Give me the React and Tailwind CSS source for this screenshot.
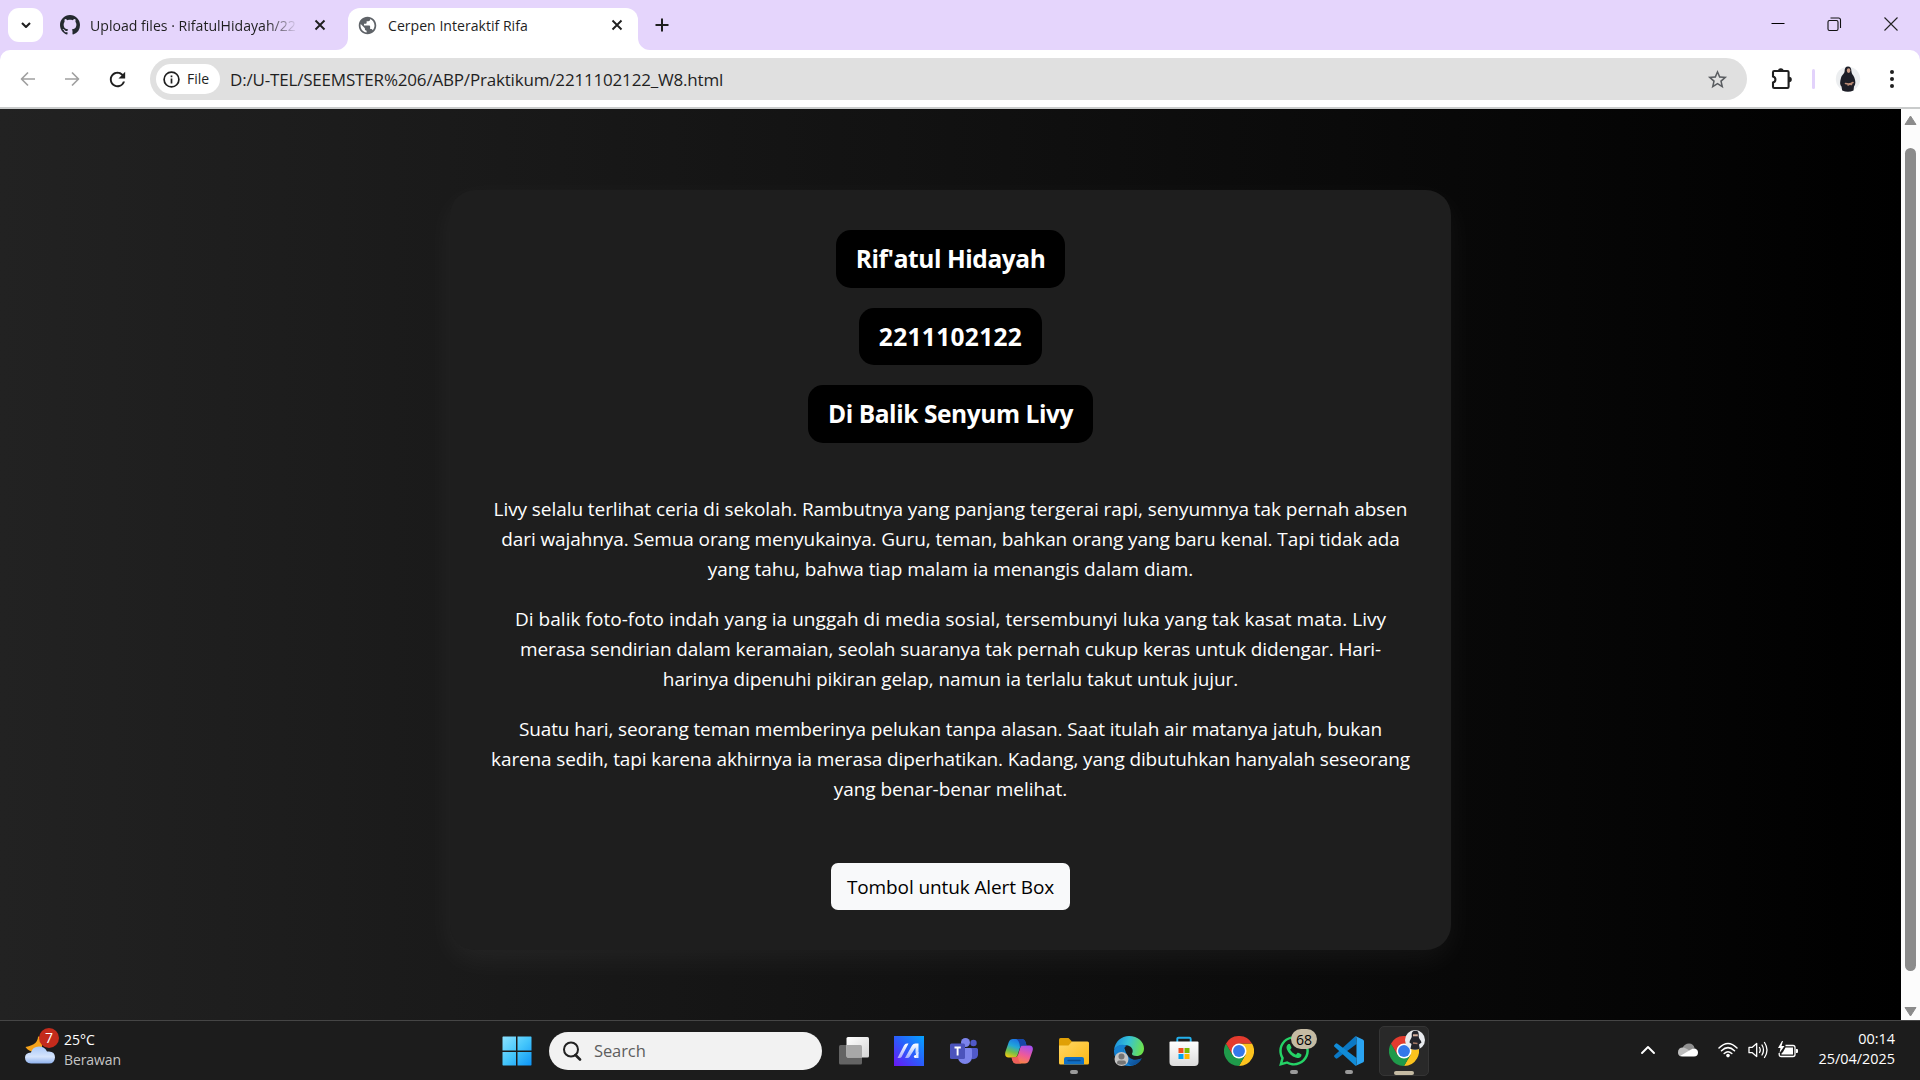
import { MdPublic, MdRefresh, MdStarBorder } from "react-icons/md";
import { FaWhatsapp } from "react-icons/fa";

const titles = [
  { text: "Rif'atul Hidayah", cls: "w-[229px] h-[58px] tracking-[-0.42px]" },
  { text: "2211102122", cls: "w-[183px] h-[57px] tracking-[0.33px]" },
  { text: "Di Balik Senyum Livy", cls: "w-[285px] h-[58px] tracking-[-0.42px]" },
];

const paragraphs = [
  [
    ["Livy selalu terlihat ceria di sekolah. Rambutnya yang panjang tergerai rapi, senyumnya tak pernah absen", "tracking-[-0.07px]"],
    ["dari wajahnya. Semua orang menyukainya. Guru, teman, bahkan orang yang baru kenal. Tapi tidak ada", "tracking-[-0.105px]"],
    ["yang tahu, bahwa tiap malam ia menangis dalam diam.", "tracking-[-0.035px]"],
  ],
  [
    ["Di balik foto-foto indah yang ia unggah di media sosial, tersembunyi luka yang tak kasat mata. Livy", "tracking-[0.045px]"],
    ["merasa sendirian dalam keramaian, seolah suaranya tak pernah cukup keras untuk didengar. Hari-", "tracking-[-0.138px]"],
    ["harinya dipenuhi pikiran gelap, namun ia terlalu takut untuk jujur.", "tracking-[-0.1px]"],
  ],
  [
    ["Suatu hari, seorang teman memberinya pelukan tanpa alasan. Saat itulah air matanya jatuh, bukan", "tracking-[-0.125px]"],
    ["karena sedih, tapi karena akhirnya ia merasa diperhatikan. Kadang, yang dibutuhkan hanyalah seseorang", "tracking-[-0.12px]"],
    ["yang benar-benar melihat.", "tracking-[-0.03px]"],
  ],
];

function Stroke({ d, size = 20, w = 2, color = "#1f1f1f", className = "", cap = "butt" }) {
  return (
    <svg className={"shrink-0 " + className} width={size} height={size} viewBox={`0 0 ${size} ${size}`} fill="none" stroke={color} strokeWidth={w} strokeLinecap={cap} strokeLinejoin="round">
      <path d={d} />
    </svg>
  );
}

function CloseX() {
  return <Stroke size={12} d="M1.5 1.5 10.5 10.5M10.5 1.5 1.5 10.5" w={1.9} />;
}

function GithubMark() {
  return (
    <svg className="shrink-0" width="20" height="20" viewBox="0 0 16 16" fill="#24292f">
      <path d="M8 0C3.58 0 0 3.58 0 8c0 3.54 2.29 6.53 5.47 7.59.4.07.55-.17.55-.38 0-.19-.01-.82-.01-1.49-2.01.37-2.53-.49-2.69-.94-.09-.23-.48-.94-.82-1.13-.28-.15-.68-.52-.01-.53.63-.01 1.08.58 1.23.82.72 1.21 1.87.87 2.33.66.07-.52.28-.87.51-1.07-1.78-.2-3.64-.89-3.64-3.95 0-.87.31-1.59.82-2.15-.08-.2-.36-1.02.08-2.12 0 0 .67-.21 2.2.82.64-.18 1.32-.27 2-.27.68 0 1.36.09 2 .27 1.53-1.04 2.2-.82 2.2-.82.44 1.1.16 1.92.08 2.12.51.56.82 1.27.82 2.15 0 3.07-1.87 3.75-3.65 3.95.29.25.54.73.54 1.48 0 1.07-.01 1.93-.01 2.2 0 .21.15.46.55.38A8.013 8.013 0 0016 8c0-4.42-3.58-8-8-8z" />
    </svg>
  );
}

function TabStrip() {
  return (
    <div className="flex h-[50px] items-end pl-2">
      <div className="mb-2 flex h-[34px] w-[35px] items-center justify-center rounded-[11px] bg-white">
        <Stroke size={12} d="M2 4 6 8 10 4" w={2.1} />
      </div>
      <div className="flex h-[42px] w-[305px] items-center pb-[8px] pl-[17px] pt-0">
        <GithubMark />
        <span className="ml-[10px] mt-[2px] w-[208px] overflow-hidden whitespace-nowrap text-[14.1px] leading-5 [mask-image:linear-gradient(to_right,black_85%,transparent)]">
          Upload files · RifatulHidayah/22
        </span>
        <span className="ml-[16px]"><CloseX /></span>
      </div>
      <div className="relative flex h-[42px] w-[290px] items-center rounded-t-[12px] bg-white pb-[8px] pl-[9px]">
        <svg className="absolute bottom-0 -left-[12px]" width="12" height="12"><path d="M12 0V12H0A12 12 0 0 0 12 0Z" fill="#fff" /></svg>
        <svg className="absolute bottom-0 -right-[12px]" width="12" height="12"><path d="M0 0V12H12A12 12 0 0 1 0 0Z" fill="#fff" /></svg>
        <MdPublic className="size-[21px] shrink-0 text-[#5f6368]" />
        <span className="ml-[10px] mt-[2px] w-[223px] whitespace-nowrap text-[14.1px] leading-5">Cerpen Interaktif Rifa</span>
        <CloseX />
      </div>
      <Stroke className="mb-[18px] ml-[17px]" size={14} d="M7 0.5V13.5M0.5 7H13.5" w={2} />
      <div className="ml-auto flex h-[50px] items-center gap-[42px] pb-[2px] pr-[22px]">
        <Stroke size={14} d="M0.5 6.5H13.5" w={1} color="#000" />
        <svg width="15" height="15" viewBox="0 0 15 15" fill="none" stroke="#111" strokeWidth="1.1">
          <rect x="1" y="3.5" width="10" height="10" rx="1.5" />
          <path d="M3.5 1H11.5A2 2 0 0 1 13.5 3V11" />
        </svg>
        <Stroke size={14} d="M0.5 0.5 13.5 13.5M13.5 0.5 0.5 13.5" w={1.1} color="#222" />
      </div>
    </div>
  );
}

function Toolbar() {
  return (
    <div className="flex h-[59px] items-start rounded-t-[10px] border-b-2 border-[#c9cbcb] bg-white pl-[20px] pt-[8px]">
      <div className="flex h-[42px] items-center">
        <Stroke size={16} d="M15 8H2M8 1.5 1.5 8 8 14.5" w={1.7} color="#a0a0a0" />
        <Stroke className="ml-[28px]" size={16} d="M1 8H14M8 1.5 14.5 8 8 14.5" w={1.7} color="#a0a0a0" />
        <MdRefresh className="ml-[26px] size-[23px] text-[#1f1f1f]" />
      </div>
      <div className="ml-[21px] flex h-[42px] w-[1597px] items-center rounded-full bg-[#e0e0e0] pl-[6px] pr-[18px]">
        <div className="flex h-[30px] w-[64px] items-center rounded-full bg-white pl-[7px]">
          <svg width="17" height="17" viewBox="0 0 17 17" fill="none" stroke="#1f1f1f" strokeWidth="1.7">
            <circle cx="8.5" cy="8.5" r="7.4" />
            <path d="M8.5 7.6V12.4M8.5 4.4V6.2" />
          </svg>
          <span className="ml-[7px] text-[14px] font-medium leading-5">File</span>
        </div>
        <span className="ml-[10px] mt-[1px] whitespace-nowrap text-[17px] leading-6 tracking-[-0.18px]">D:/U-TEL/SEEMSTER%206/ABP/Praktikum/2211102122_W8.html</span>
        <MdStarBorder className="ml-auto size-[23px] text-[#5a5d61]" />
      </div>
      <div className="ml-[24px] flex h-[42px] items-center">
        <svg width="23" height="22" viewBox="0 0 23 22" fill="none">
          <path d="M3.2 3H16.4A1.2 1.2 0 0 1 17.6 4.2V18.8A1.2 1.2 0 0 1 16.4 20H3.2A1.2 1.2 0 0 1 2 18.8V14.6A3.2 3.2 0 0 0 2 8.4V4.2A1.2 1.2 0 0 1 3.2 3Z" stroke="#1f1f1f" strokeWidth="2.1" />
          <path d="M7 3A2.8 2.8 0 0 1 12.6 3ZM18 8.7A2.8 2.8 0 0 1 18 14.3Z" fill="#1f1f1f" />
        </svg>
        <div className="ml-[18px] h-[20px] w-[3px] rounded bg-[#e2d2fb]" />
        <svg className="ml-[20px]" width="26" height="26" viewBox="0 0 26 26">
          <circle cx="13" cy="13" r="12.2" fill="#eceef0" />
          <path d="M13 .5C10.600.5 9.600 2.600 9.600 5.200 9.600 7.500 7 8.500 6 12 5 15.500 4.500 18.500 6.500 20.500L7.200 24.500Q13 27 18.500 24.500L19 20.500C21 18 20.500 14.500 19.300 11.500 18.300 9 16.500 8 16.400 5 16.300 2.300 15.400.5 13 .5Z" fill="#1c1d26" />
          <ellipse cx="13.600" cy="4.600" rx="1.800" ry="2.400" fill="#c99b85" />
          <path d="M10.500 17.500 16.500 18.500M13 19 18 16.500" stroke="#b98a74" strokeWidth="1.600" strokeLinecap="round" />
        </svg>
        <svg className="ml-[28px]" width="6" height="20" viewBox="0 0 6 20" fill="#1f1f1f">
          <circle cx="3" cy="3" r="2" /><circle cx="3" cy="10" r="2" /><circle cx="3" cy="17" r="2" />
        </svg>
      </div>
    </div>
  );
}

function Page() {
  return (
    <div className="flex h-[911px] bg-[#fcfcfc]">
      <main className="flex w-[1901px] justify-center bg-[linear-gradient(to_right,#222222,#000000)] pt-[81px] text-white">
        <section className="flex h-[760px] w-[1001px] flex-col items-center rounded-[25px] bg-[#1e1e1e] pt-[40px] shadow-[0_10px_30px_rgba(255,255,255,0.05)]">
          <div className="flex flex-col items-center gap-[20px]">
            {titles.map((t) => (
              <h1 key={t.text} className={"flex items-center justify-center whitespace-nowrap rounded-[15px] bg-black pt-[1px] text-[24.5px] font-bold " + t.cls}>{t.text}</h1>
            ))}
          </div>
          <div className="mt-[51px] flex flex-col gap-[20px]">
            {paragraphs.map((lines, i) => (
              <p key={i} className="text-center text-[19px] leading-[30px]">
                {lines.map(([text, cls]) => (
                  <span key={text} className={"block whitespace-nowrap " + cls}>{text}</span>
                ))}
              </p>
            ))}
          </div>
          <button className="mt-[59px] h-[47px] w-[239px] rounded-[7px] bg-[#f8f9fa] pt-[2px] text-[19px] tracking-[-0.11px] text-black">Tombol untuk Alert Box</button>
        </section>
      </main>
      <div className="flex w-[19px] flex-col items-center pb-[3px] pt-[6px]">
        <svg width="13" height="11" viewBox="0 0 13 11"><path d="M6.500 1 12 9.500H1Z" fill="#8b8b8b" stroke="#8b8b8b" strokeLinejoin="round" /></svg>
        <div className="mt-[22px] h-[823px] w-[11px] rounded-full bg-[#8b8b8b]" />
        <svg className="mt-auto" width="13" height="11" viewBox="0 0 13 11"><path d="M6.500 10 12 1.500H1Z" fill="#8b8b8b" stroke="#8b8b8b" strokeLinejoin="round" /></svg>
      </div>
    </div>
  );
}

function WindowsLogo() {
  return (
    <svg width="30" height="30" viewBox="0 0 30 30">
      <defs><linearGradient id="win" x1="0" y1="0" x2="30" y2="30" gradientUnits="userSpaceOnUse"><stop stopColor="#8fe3ff" /><stop offset=".5" stopColor="#45c6fb" /><stop offset="1" stopColor="#0a92f7" /></linearGradient></defs>
      <path d="M1 .5H14V14.500H.5V1ZM15.500.5H29L29.500 1V14.500H15.500ZM.5 16H14V29.500H1L.5 29ZM15.500 16H29.500V29L29 29.500H15.500Z" fill="url(#win)" />
    </svg>
  );
}

function TaskView() {
  return (
    <svg width="30" height="30" viewBox="0 0 30 30">
      <defs><linearGradient id="tv" x1="0" y1="0" x2="1" y2="1"><stop stopColor="#fff" /><stop offset="1" stopColor="#d5d5d5" /></linearGradient></defs>
      <rect x="0" y="9" width="23" height="19.500" rx="1.500" fill="#636363" />
      <rect x="7.500" y="1" width="22.500" height="20.500" rx="1.500" fill="url(#tv)" />
      <path d="M7.500 9H21.500Q23 9 23 10.500V21.500H9Q7.500 21.500 7.500 20Z" fill="#a8a8a8" />
    </svg>
  );
}

function MyAsus() {
  return (
    <svg width="30" height="30" viewBox="0 0 30 30">
      <defs>
        <linearGradient id="as" x1="0" y1="1" x2="1" y2="0"><stop stopColor="#6a16f5" /><stop offset=".5" stopColor="#2b5cfb" /><stop offset="1" stopColor="#04a4ff" /></linearGradient>
        <linearGradient id="asw" x1="0" y1="1" x2="0" y2="0"><stop stopColor="#fff" stopOpacity=".55" /><stop offset="1" stopColor="#fff" /></linearGradient>
      </defs>
      <rect width="30" height="30" fill="url(#as)" />
      <path d="M3.500 22 10 9.500Q11 7.500 13 7.500H14.500L7.500 21Q6.800 22 5.500 22ZM11 22 18 9.500Q19.200 7.500 21.500 7.500H24.500V17.500H21.500V11.500L15.500 21Q14.800 22 13.500 22Z" fill="url(#asw)" />
      <circle cx="21.500" cy="20.500" r="1.600" fill="#fff" /><path d="M22 17.500 24.500 16V22H22Z" fill="#dce6ff" />
    </svg>
  );
}

function Teams() {
  return (
    <svg width="30" height="30" viewBox="0 0 30 30">
      <circle cx="24.500" cy="7" r="3.200" fill="#5059c9" />
      <path d="M20 12H27.500Q29 12 29 13.500V19A5 5 0 0 1 20 21Z" fill="#5059c9" />
      <circle cx="16.500" cy="6.500" r="4.500" fill="#7b83eb" />
      <path d="M9 12H21.500Q23 12 23 13.500V21A7 7 0 0 1 9 21Z" fill="#7b83eb" />
      <rect x="1" y="7.500" width="15" height="15.500" rx="1.500" fill="#4b53bc" />
      <path d="M5.500 11.500H11.800M8.600 11.500V19.500" stroke="#fff" strokeWidth="1.900" />
    </svg>
  );
}

function Copilot() {
  return (
    <svg width="30" height="30" viewBox="0 0 30 30">
      <defs>
        <linearGradient id="c1" x1=".6" y1="0" x2=".2" y2="1"><stop stopColor="#1a6fe8" /><stop offset=".4" stopColor="#22a6d8" /><stop offset=".7" stopColor="#6fbf4b" /><stop offset="1" stopColor="#f2c811" /></linearGradient>
        <linearGradient id="c2" x1=".7" y1="0" x2=".3" y2="1"><stop stopColor="#a64ff0" /><stop offset=".5" stopColor="#ee5a9a" /><stop offset="1" stopColor="#fb8a3a" /></linearGradient>
      </defs>
      <path d="M9 3H18Q20.500 3 21.300 5.500L22.500 9.500H18.500Q16.500 9.500 15.800 12L13.500 19Q12.800 21.500 10.500 21.500H4.500Q0 21 1.500 15.500L4.800 6Q6 3 9 3Z" fill="url(#c1)" />
      <path d="M21 27.500H12Q9.500 27.500 8.700 25L7.500 21.500H11Q13.300 21.500 14 19L16.300 11.500Q17 9.500 19 9.500H25.500Q30 10 28.500 15L25.200 24.500Q24 27.500 21 27.500Z" fill="url(#c2)" />
      <path d="M12 3H18Q20.500 3 21.300 5.500L22.500 9.500H18.500Q16.700 9.500 16 11.500 15.500 4 12 3Z" fill="#1746a8" />
      <path d="M7.500 21.500H11Q13.300 21.500 14 19 14 26.500 17.500 27.500H12Q9.500 27.500 8.700 25Z" fill="#ef5f5b" />
    </svg>
  );
}

function Folder() {
  return (
    <svg width="30" height="30" viewBox="0 0 30 30">
      <defs><linearGradient id="fo" x1="0" y1="0" x2="1" y2="1"><stop stopColor="#ffd766" /><stop offset="1" stopColor="#fdb913" /></linearGradient></defs>
      <path d="M0 3.500Q0 2 1.500 2H9.500L13 5.500V12H0Z" fill="#e0a006" />
      <path d="M0 9.500H9.500L13 5.500H28.500Q30 5.500 30 7V27Q30 28.500 28.500 28.500H1.500Q0 28.500 0 27Z" fill="url(#fo)" />
      <path d="M5 28.500V23Q5 21 7 21H23Q25 21 25 23V28.500Z" fill="#0f6fc5" />
      <path d="M9 24.500H21" stroke="#0a4a8c" strokeWidth="1.300" strokeLinecap="round" />
    </svg>
  );
}

function Edge() {
  return (
    <svg width="30" height="30" viewBox="0 0 30 30">
      <defs>
        <linearGradient id="e1" x1="0" y1=".3" x2="1" y2=".5"><stop stopColor="#1b8fdd" /><stop offset=".45" stopColor="#35c1d8" /><stop offset="1" stopColor="#6ee34a" /></linearGradient>
        <linearGradient id="e2" x1="0" y1="0" x2="1" y2="1"><stop stopColor="#1a92df" /><stop offset="1" stopColor="#0b3f86" /></linearGradient>
      </defs>
      <path d="M0 14C1 5.500 7.500 0 15 0 24 0 30 6 30 12.500 30 17.500 26.500 20 22.500 20 19 20 17.500 18.500 18 17.500 19.500 15.500 19 11 14 9.500 8 8 2 10 0 14Z" fill="url(#e1)" />
      <path d="M0 14C2 9 8 7.500 13 9.500 10 11 9.500 14 10 17 11 23 17 26.500 27.500 22.500 25 27.500 20 30 15 30 6 30-.5 23 0 14Z" fill="#1580d0" />
      <path d="M10.500 12C8.500 17 9 25 17 29.800 21.500 29.500 25.500 26.500 27.800 22.300 20 26 13 23 10.500 12Z" fill="url(#e2)" />
      <circle cx="7.500" cy="23" r="7" fill="#c4c4c4" />
      <circle cx="7.500" cy="20.500" r="3" fill="#757575" /><path d="M3 27.500Q3 24.500 5 24.500H10Q12 24.500 12 27.500Q7.500 30 3 27.500Z" fill="#757575" />
    </svg>
  );
}

function Store() {
  return (
    <svg width="30" height="30" viewBox="0 0 30 30">
      <defs><linearGradient id="st" x1="0" y1="0" x2="0" y2="1"><stop stopColor="#fff" /><stop offset="1" stopColor="#dcdcdc" /></linearGradient></defs>
      <path d="M8.300 6V3Q8.300 1.700 9.600 1.700H20.400Q21.700 1.700 21.700 3V6" stroke="#23b0ec" strokeWidth="1.900" fill="none" />
      <path d="M.5 6.500Q.5 5.500 1.500 5.500H28.500Q29.500 5.500 29.500 6.500V26Q29.500 30 25.500 30H4.500Q.5 30 .5 26Z" fill="url(#st)" />
      <path d="M9.500 12H14.500V17H9.500Z" fill="#f04e1f" /><path d="M15.500 12H20.500V17H15.500Z" fill="#7cb900" />
      <path d="M9.500 18H14.500V23H9.500Z" fill="#00a3ee" /><path d="M15.500 18H20.500V23H15.500Z" fill="#ffb700" />
    </svg>
  );
}

function Chrome() {
  return (
    <svg width="30" height="30" viewBox="0 0 48 48">
      <path d="M24 12H44.800A24 24 0 0 1 24 48L34.400 30Z" fill="#fcc31e" />
      <path d="M3.200 12A24 24 0 0 0 24 48L34.400 30 24 34 13.600 30Z" fill="#1f9a4a" />
      <path d="M24 12H44.800A24 24 0 0 0 3.200 12L13.600 30Z" fill="#e33b2e" />
      <circle cx="24" cy="24" r="12" fill="#fff" /><circle cx="24" cy="24" r="9.500" fill="#3478ea" />
    </svg>
  );
}

function VsCode() {
  return (
    <svg width="30" height="30" viewBox="0 0 30 30">
      <path d="M22 0 22.500 8 3.500 22.300Q2.500 23 1.600 22.200L.4 21Q-.4 20 .5 19.200L20.500 1Q21.200.3 22 0Z" fill="#0b78c4" />
      <path d="M22 30 22.500 22 3.500 7.700Q2.500 7 1.600 7.800L.4 9Q-.4 10 .5 10.800L20.500 29Q21.200 29.700 22 30Z" fill="#118cd8" />
      <path d="M21.800 29.800Q22.500 28.500 22.500 27V3Q22.500 1.500 21.800.2L28.800 3.400Q30 4 30 5.300V24.700Q30 26 28.800 26.600Z" fill="#2aa4f2" />
    </svg>
  );
}

function TaskCell({ children, run }) {
  return (
    <div className="relative flex h-[59px] w-[55px] items-center justify-center">
      {children}
      {run && <span className="absolute bottom-[6px] h-[4px] w-[8px] rounded-full bg-[#9a9a9a]" />}
    </div>
  );
}

function Taskbar() {
  return (
    <footer className="flex h-[60px] border-t border-[#454545] bg-[#1c1c1c] text-white">
      <div className="flex w-[502px] items-center pl-[25px]">
        <div className="relative h-[30px] w-[30px]">
          <svg width="30" height="29" viewBox="0 0 30 29">
            <defs><linearGradient id="cl" x1="0" y1="0" x2="0" y2="1"><stop stopColor="#a9c8f8" /><stop offset=".6" stopColor="#d5e4fc" /><stop offset="1" stopColor="#8fb2ee" /></linearGradient></defs>
            <path d="M13 .5C13 5 10 9.500.5 11 3.500 16.500 13 18 17 12V1Z" fill="#f5a31c" />
            <path d="M6 27.500Q0 27 0 21.500 0 17 6 16.500 7.500 10.500 14 10.500 19.500 10.500 22 15.500 30 14.500 30 21.500 29.500 27.500 24 27.500Z" fill="url(#cl)" />
          </svg>
          <span className="absolute -top-[8px] left-[14px] flex size-[20px] items-center justify-center rounded-full bg-[#c42b1c] text-[14px]">7</span>
        </div>
        <div className="mb-[2px] ml-[9px] text-[14px] leading-[20px]">
          <div>25°C</div>
          <div className="tracking-[-0.1px] text-[#c5c5c5]">Berawan</div>
        </div>
      </div>
      <div className="flex items-center">
        <WindowsLogo />
        <div className="ml-[17px] flex h-[38px] w-[273px] items-center rounded-full bg-[#f2f2f2] pl-[13px]">
          <svg width="20" height="20" viewBox="0 0 20 20" fill="none" stroke="#222" strokeWidth="2"><circle cx="9" cy="8.500" r="7" /><path d="M13.500 14 18 18.500" strokeWidth="2.600" strokeLinecap="round" /></svg>
          <span className="ml-[12px] mt-[1px] text-[16.500px] tracking-[-0.1px] text-[#5e5e5e]">Search</span>
        </div>
      </div>
      <div className="ml-[4px] flex items-center">
        <TaskCell><TaskView /></TaskCell>
        <TaskCell><MyAsus /></TaskCell>
        <TaskCell><Teams /></TaskCell>
        <TaskCell><Copilot /></TaskCell>
        <TaskCell run><Folder /></TaskCell>
        <TaskCell><Edge /></TaskCell>
        <TaskCell><Store /></TaskCell>
        <TaskCell><Chrome /></TaskCell>
        <TaskCell run>
          <FaWhatsapp className="size-[34px] text-[#25d366]" />
          <span className="absolute left-[25px] top-[8px] flex h-[20px] w-[26px] items-center justify-center rounded-full bg-[#c5bba3] text-[14px] text-black">68</span>
        </TaskCell>
        <TaskCell run><VsCode /></TaskCell>
        <div className="relative ml-[3px] flex h-[50px] w-[50px] items-center justify-center rounded-[5px] border border-[#353535] bg-[#292929]">
          <Chrome />
          <svg className="absolute left-[25px] top-[3px]" width="20" height="20" viewBox="0 0 20 20">
            <circle cx="10" cy="10" r="10" fill="#e9ebee" />
            <path d="M10.500.8C7 .8 6.500 3.500 6.800 6 7 8.500 4.500 10 4.500 12.500L6.500 14 5.500 18.700Q10 21 14.800 18.700L14 14.500 16.500 12.500C16 10 13.500 9 13.700 6 13.900 3 13.500.8 10.500.8Z" fill="#23242b" />
            <path d="M8 5.300H12.800" stroke="#d8b3a0" strokeWidth="2" />
            <path d="M8 13 12.500 13.500" stroke="#a87b67" strokeWidth="1.500" />
          </svg>
          <span className="absolute bottom-0 h-[4px] w-[20px] rounded-full bg-[#c5bba3]" />
        </div>
      </div>
      <div className="ml-auto flex items-center pb-[1px] pr-[25px]">
        <Stroke size={14} d="M1 10 7 4 13 10" w={1.9} color="#fff" cap="round" />
        <svg className="ml-[23px]" width="20" height="14" viewBox="0 0 20 14">
          <path d="M4.500 5Q6.500.5 11 .5 15.500.5 16.500 5L10 9Z" fill="#8f8f8f" />
          <path d="M0 9.500Q0 4.500 5 4.500 7.500 4.500 12 8L3 13.500Q0 12.500 0 9.500Z" fill="#bdbdbd" />
          <path d="M2.500 12.800 13 6.500Q15 5 17 5.500 20 6.500 20 9.500 20 13.500 16 13.500H4.500Q3 13.500 2.500 12.800Z" fill="#fff" />
        </svg>
        <svg className="ml-[20px]" width="20" height="16" viewBox="0 0 20 16" fill="none" stroke="#fff" strokeWidth="1.500" strokeLinecap="round">
          <path d="M1 6Q10-3 19 6M3.500 8.800Q10 2.500 16.500 8.800M6.200 11.500Q10 8 13.800 11.500" />
          <circle cx="10" cy="13.600" r="1.800" fill="#fff" stroke="none" />
        </svg>
        <svg className="ml-[10px]" width="21" height="18" viewBox="0 0 21 18" fill="none" stroke="#fff" strokeWidth="1.300" strokeLinecap="round" strokeLinejoin="round">
          <path d="M1 6.300H4.300L8.700 2.500V15.500L4.300 11.700H1ZM11.500 6.500Q13 9 11.500 11.500M14 4Q17 9 14 14M16.500 1.500Q21.500 9 16.500 16.500" />
        </svg>
        <svg className="ml-[9px]" width="20" height="18" viewBox="0 0 20 18">
          <path d="M7.500 4.500H15Q17 4.500 17 6.500V13.500Q17 15.500 15 15.500H3.200Q1.200 15.500 1.200 13.500V12" fill="none" stroke="#fff" strokeWidth="1.300" />
          <path d="M7.500 6.500H15V13.500H3.500V12.500L5 11ZM18 8H19Q20 8 20 9V11Q20 12 19 12H18Z" fill="#fff" />
          <path d="M4 0 0 7H2.500L1.500 12 6.500 5H3.500L5 0Z" fill="#fff" />
        </svg>
        <div className="mb-[2px] ml-[21px] text-right text-[14.400px] leading-[20px]">
          <div>00:14</div>
          <div>25/04/2025</div>
        </div>
      </div>
    </footer>
  );
}

export default function App() {
  return (
    <div className="h-[1080px] w-[1920px] overflow-hidden bg-[#e5d5fc] font-['Open_Sans','Noto_Sans',sans-serif] text-[#1f1f1f]">
      <TabStrip />
      <Toolbar />
      <Page />
      <Taskbar />
    </div>
  );
}
